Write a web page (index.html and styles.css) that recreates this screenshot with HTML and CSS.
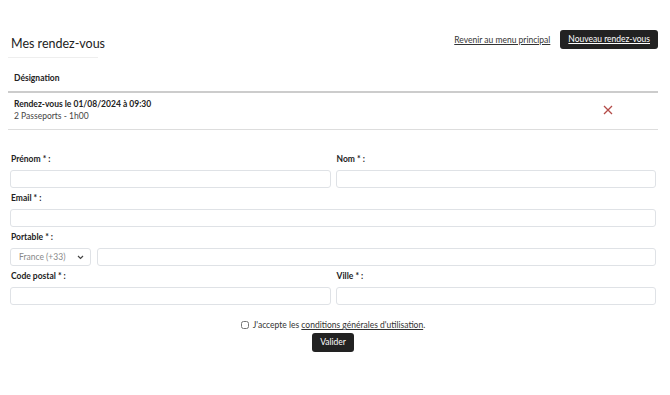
FILE: index.html
```html
<!DOCTYPE html>
<html lang="fr">
<head>
    <meta charset="UTF-8">
    <meta name="viewport" content="width=device-width, initial-scale=1.0">
    <title>Mes rendez-vous</title>
    <link rel="stylesheet" href="styles.css">
</head>
<body>

<div class="page">
    <!-- Header -->
    <div class="top">
        <h2 class="title">Mes rendez-vous</h2>
        <div class="actions">
            <a href="#" class="back-link">Revenir au menu principal</a>
            <a href="#" class="dark-button">Nouveau rendez-vous</a>
        </div>
    </div>

    <!-- Appointments -->
    <table class="rdv-table">
        <thead>
            <tr>
                <th>Désignation</th>
                <th class="col-action"></th>
            </tr>
        </thead>
        <tbody>
            <tr>
                <td>
                    <div class="rdv-date">Rendez-vous le 01/08/2024 à 09:30</div>
                    <div class="rdv-detail">2 Passeports - 1h00</div>
                </td>
                <td class="col-action">
                    <svg class="delete-icon" width="10" height="10" viewBox="0 0 10 10">
                        <path d="M1 1 L9 9 M9 1 L1 9" stroke="#b34b48" stroke-width="1.3" fill="none"/>
                    </svg>
                </td>
            </tr>
        </tbody>
    </table>

    <!-- Form -->
    <form class="rdv-form">
        <div class="row">
            <div class="field">
                <label for="prenom">Prénom * :</label>
                <input type="text" id="prenom">
            </div>
            <div class="field">
                <label for="nom">Nom * :</label>
                <input type="text" id="nom">
            </div>
        </div>
        <div class="field">
            <label for="email">Email * :</label>
            <input type="text" id="email">
        </div>
        <div class="field">
            <label for="portable">Portable * :</label>
            <div class="phone">
                <div class="select-box">
                    <span>France (+33)</span>
                    <svg width="7" height="5" viewBox="0 0 7 5">
                        <path d="M1 1 L3.5 3.5 L6 1" stroke="#444" stroke-width="1.2" fill="none"/>
                    </svg>
                </div>
                <input type="text" id="portable">
            </div>
        </div>
        <div class="row">
            <div class="field">
                <label for="cp">Code postal * :</label>
                <input type="text" id="cp">
            </div>
            <div class="field">
                <label for="ville">Ville * :</label>
                <input type="text" id="ville">
            </div>
        </div>

        <div class="terms">
            <label>
                <input type="checkbox" class="check">
                J'accepte les <a href="#">conditions générales d'utilisation</a>.
            </label>
        </div>
        <div class="submit-line">
            <button type="button" class="dark-button">Valider</button>
        </div>
    </form>
</div>

</body>
</html>
```

FILE: styles.css
```css
body {
    margin: 0;
    font-family: Lato, "Noto Sans", sans-serif;
    color: #222;
    background-color: #fff;
}
.page {
    padding: 30px 12px 0 8px;
}
.top {
    display: flex;
    justify-content: space-between;
    align-items: flex-start;
}
.title {
    margin: 0;
    width: 87px;
    padding: 6px 0 5px 3px;
    font-size: 12.5px;
    font-weight: normal;
    line-height: 16px;
    white-space: nowrap;
    border-bottom: 1px solid #eee;
}
.actions {
    display: flex;
    align-items: center;
    gap: 10px;
}
.back-link {
    font-size: 8.5px;
    color: #333;
    text-decoration: underline;
}
.dark-button {
    display: inline-block;
    background-color: #222;
    color: #fff;
    font-family: inherit;
    font-size: 8.5px;
    line-height: 19px;
    padding: 0 8px;
    border: none;
    border-radius: 3px;
    text-decoration: underline;
}
.rdv-table {
    width: 100%;
    margin-top: 8px;
    border-collapse: collapse;
    font-size: 8.5px;
}
.rdv-table th {
    text-align: left;
    font-weight: bold;
    padding: 6px 6px;
    line-height: 13px;
    border-bottom: 2px solid #ccc;
}
.rdv-table td {
    padding: 5px 6px 7px;
    line-height: 12px;
    border-bottom: 1px solid #ddd;
    vertical-align: middle;
}
.rdv-table .col-action {
    width: 88px;
    text-align: center;
}
.rdv-date {
    font-weight: bold;
}
.rdv-detail {
    color: #444;
}
.delete-icon {
    display: block;
    margin: 0 auto;
}
.rdv-form {
    margin-top: 23px;
    padding: 0 2px;
    font-size: 8.5px;
}
.row {
    display: flex;
    gap: 5px;
}
.row .field {
    flex: 1;
}
.field {
    margin-bottom: 4px;
}
.field label {
    display: block;
    font-weight: bold;
    line-height: 13px;
    margin-bottom: 4px;
    padding-left: 1px;
}
.field input[type="text"] {
    display: block;
    width: 100%;
    height: 18px;
    box-sizing: border-box;
    border: 1px solid #dfe2e6;
    border-radius: 3px;
    padding: 0 5px;
    font-family: inherit;
    font-size: 9px;
}
.phone {
    display: flex;
    gap: 6px;
}
.select-box {
    flex: 0 0 81px;
    height: 18px;
    box-sizing: border-box;
    border: 1px solid #dfe2e6;
    border-radius: 3px;
    display: flex;
    align-items: center;
    justify-content: space-between;
    padding: 0 6px 0 8px;
    color: #888;
}
.terms {
    margin-top: 10px;
    text-align: center;
    line-height: 13px;
    color: #333;
}
.terms a {
    color: #333;
}
.check {
    width: 8px;
    height: 8px;
    margin: 0 2px 0 0;
    vertical-align: -1px;
}
.submit-line {
    text-align: center;
    margin-top: 1px;
}
.submit-line .dark-button {
    text-decoration: none;
    padding: 0 8px;
}
```
